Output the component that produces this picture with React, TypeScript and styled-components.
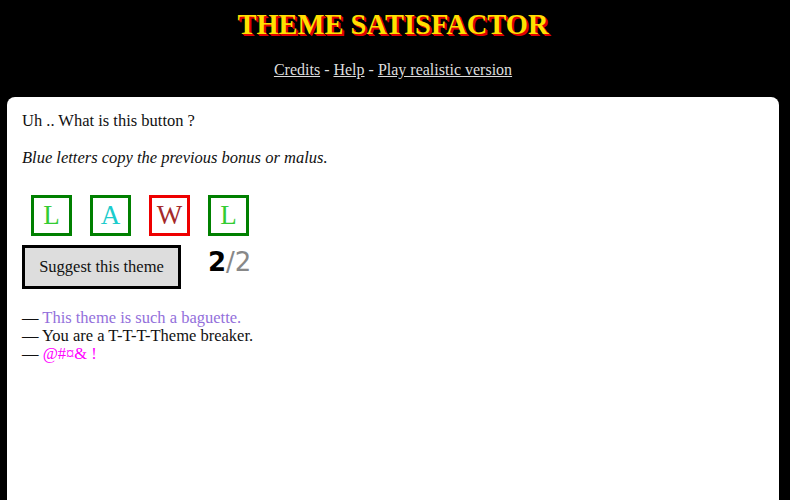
import React from "react";
import styled, { createGlobalStyle } from "styled-components";

const Global = createGlobalStyle`
  html, body {
    margin: 0;
    padding: 0;
    background: #000;
  }
  body {
    font-family: "Liberation Serif", "Times New Roman", serif;
    color: #111;
  }
`;

const Page = styled.div`
  width: 790px;
  height: 500px;
  overflow: hidden;
  background: #000;
  padding: 0 11px 0 7px;
  box-sizing: border-box;
`;

const Header = styled.header`
  display: flex;
  flex-direction: column;
  align-items: center;
  padding-top: 8px;
  height: 97px;
  box-sizing: border-box;
`;

const Title = styled.h1`
  margin: 0;
  font-family: "Liberation Serif", serif;
  font-weight: bold;
  font-size: 28.5px;
  line-height: 34px;
  color: #ffe000;
  text-shadow: 2px 2px 0 #e00000, 1px 1px 0 #e00000;
`;

const Nav = styled.nav`
  margin-top: 19px;
  font-size: 16px;
  color: #ddd;
`;

const NavLink = styled.a`
  color: #ddd;
  text-decoration: underline;
  cursor: pointer;
`;

const Panel = styled.main`
  background: #fff;
  border-radius: 8px 8px 0 0;
  height: 420px;
  padding: 14px 15px;
  box-sizing: border-box;
  font-size: 16.5px;
`;

const Line = styled.p<{ $italic?: boolean }>`
  margin: 0 0 17px;
  line-height: 20px;
  font-style: ${(p) => (p.$italic ? "italic" : "normal")};
`;

const Letters = styled.div`
  display: flex;
  gap: 18px;
  margin: 27px 0 0 9px;
`;

const LetterBox = styled.div<{ $border: string; $ink: string }>`
  width: 41px;
  height: 41px;
  box-sizing: border-box;
  border: 3px solid ${(p) => p.$border};
  color: ${(p) => p.$ink};
  font-size: 27px;
  display: flex;
  align-items: center;
  justify-content: center;
`;

const ActionRow = styled.div`
  display: flex;
  align-items: center;
  gap: 27px;
  margin-top: 9px;
`;

const SuggestButton = styled.button`
  width: 159px;
  height: 44px;
  box-sizing: border-box;
  border: 3px solid #000;
  background: #ddd;
  font-family: "Liberation Serif", serif;
  font-size: 16.5px;
  color: #111;
  padding: 0;
  cursor: pointer;
`;

const Score = styled.span`
  font-family: "DejaVu Sans", sans-serif;
  font-size: 26px;
  margin-top: -10px;
`;

const Got = styled.span`
  color: #000;
  font-weight: bold;
`;

const Max = styled.span`
  color: #888;
`;

const Comments = styled.ul`
  list-style: none;
  margin: 20px 0 0;
  padding: 0;
`;

const Comment = styled.li<{ $tone: string }>`
  line-height: 18px;
  color: #111;
  span {
    color: ${(p) => p.$tone};
  }
`;

const letters = [
  { ch: "L", border: "#008000", ink: "#33cc33" },
  { ch: "A", border: "#008000", ink: "#1ccccc" },
  { ch: "W", border: "#ee0000", ink: "#a52a2a" },
  { ch: "L", border: "#008000", ink: "#33cc33" },
];

const remarks = [
  { text: "This theme is such a baguette.", tone: "#9370db" },
  { text: "You are a T-T-T-Theme breaker.", tone: "#111" },
  { text: "@#¤& !", tone: "#ff00ff" },
];

export default function App() {
  return (
    <Page>
      <Global />
      <Header>
        <Title>THEME SATISFACTOR</Title>
        <Nav>
          <NavLink>Credits</NavLink> - <NavLink>Help</NavLink> -{" "}
          <NavLink>Play realistic version</NavLink>
        </Nav>
      </Header>
      <Panel>
        <Line>Uh .. What is this button ?</Line>
        <Line $italic>Blue letters copy the previous bonus or malus.</Line>
        <Letters>
          {letters.map((l, i) => (
            <LetterBox key={i} $border={l.border} $ink={l.ink}>
              {l.ch}
            </LetterBox>
          ))}
        </Letters>
        <ActionRow>
          <SuggestButton>Suggest this theme</SuggestButton>
          <Score>
            <Got>2</Got>
            <Max>/2</Max>
          </Score>
        </ActionRow>
        <Comments>
          {remarks.map((r, i) => (
            <Comment key={i} $tone={r.tone}>
              — <span>{r.text}</span>
            </Comment>
          ))}
        </Comments>
      </Panel>
    </Page>
  );
}
